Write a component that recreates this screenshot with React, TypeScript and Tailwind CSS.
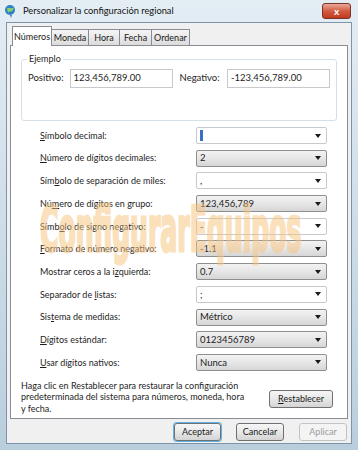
import React from "react";

const font = { fontFamily: 'Lato, "Noto Sans", Arial, sans-serif' };

type Row = { label: React.ReactNode; value: string; list: boolean };

const u = (s: string) => <span className="underline underline-offset-[1px]">{s}</span>;

const rows: Row[] = [
  { label: <>{u("S")}ímbolo decimal:</>, value: "", list: false },
  { label: <>{u("N")}úmero de dígitos decimales:</>, value: "2", list: true },
  { label: <>Sím{u("b")}olo de separación de miles:</>, value: ",", list: false },
  { label: <>Nú{u("m")}ero de dígitos en grupo:</>, value: "123,456,789", list: true },
  { label: <>Símb{u("o")}lo de signo negativo:</>, value: "-", list: false },
  { label: <>{u("F")}ormato de número negativo:</>, value: "-1.1", list: true },
  { label: <>Mostrar ceros a la i{u("z")}quierda:</>, value: "0.7", list: true },
  { label: <>Separador de {u("l")}istas:</>, value: ";", list: false },
  { label: <>Sis{u("t")}ema de medidas:</>, value: "Métrico", list: true },
  { label: <>{u("D")}ígitos estándar:</>, value: "0123456789", list: true },
  { label: <>{u("U")}sar dígitos nativos:</>, value: "Nunca", list: true },
];

function Arrow() {
  return (
    <svg width="6" height="4" viewBox="0 0 6 4" className="shrink-0">
      <path d="M0 0h6L3 4z" fill="#1a1a1a" />
    </svg>
  );
}

function Combo({ value, list, first }: { value: string; list: boolean; first?: boolean }) {
  return (
    <div
      className={`flex h-[17px] w-[131px] items-center justify-between rounded-[2px] border pl-[3px] pr-[5px] text-[9.5px] ${
        list
          ? "border-[#8e8f8f] bg-gradient-to-b from-[#f3f3f3] via-[#e6e6e6] to-[#d6d6d6]"
          : "border-[#c6c9ce] bg-white"
      }`}
    >
      <span className="leading-none text-[#222]">
        {first ? <span className="inline-block h-[11px] w-[3px] bg-[#3a6fc8] align-middle" /> : value}
      </span>
      <Arrow />
    </div>
  );
}

function Btn({ children, disabled, w }: { children: React.ReactNode; disabled?: boolean; w: string }) {
  return (
    <div
      className={`flex h-[18px] ${w} items-center justify-center rounded-[3px] border text-[9px] ${
        disabled
          ? "border-[#c4c4c4] bg-[#f4f4f4] text-[#9c9c9c]"
          : "border-[#707070] bg-gradient-to-b from-[#f6f6f6] via-[#e8e8e8] to-[#d4d4d4] text-[#1a1a1a]"
      }`}
    >
      {children}
    </div>
  );
}

export default function App() {
  return (
    <div
      className="relative h-[450px] w-[358px] overflow-hidden bg-gradient-to-b from-[#e4edf4] via-[#cddde9] to-[#b9cedd]"
      style={font}
    >
      {/* Title bar */}
      <div className="flex h-[22px] items-center pl-[4px]">
        <svg width="14" height="14" viewBox="0 0 14 14">
          <circle cx="6" cy="6" r="5" fill="#2f7fc6" />
          <path d="M3 4c2-1 3 1 5 0s2 2 0 3-3 0-4 2" fill="#8fd06a" />
          <path d="M6 11l1 3 1-3z" fill="#2f7fc6" />
        </svg>
        <span className="ml-[5px] text-[9.3px] text-[#111]">Personalizar la configuración regional</span>
        <div className="ml-auto mr-[7px] flex h-[16px] w-[29px] items-center justify-center rounded-[3px] border border-[#7a3326] bg-gradient-to-b from-[#e8a89a] via-[#d35a41] to-[#c0391e] text-[10px] font-bold text-white">
          x
        </div>
      </div>

      {/* Client area */}
      <div className="mx-[6px] flex h-[422px] flex-col border border-[#7f94a8] bg-[#f0f0f0]">
        {/* Tabs */}
        <div className="mt-[2px] flex h-[20px] items-end pl-[5px] text-[9px] text-[#1a1a1a]">
          <div className="relative z-10 -mb-px flex h-[20px] w-[40px] items-center justify-center border border-b-0 border-[#898c95] bg-white">
            Números
          </div>
          {["Moneda", "Hora", "Fecha", "Ordenar"].map((t, i) => (
            <div
              key={t}
              className={`flex h-[16px] items-center justify-center border border-l-0 border-b-0 border-[#898c95] bg-gradient-to-b from-[#f5f5f5] to-[#dcdcdc] ${
                ["w-[37px]", "w-[31px]", "w-[32px]", "w-[38px]"][i]
              }`}
            >
              {t}
            </div>
          ))}
        </div>

        {/* Panel */}
        <div className="mx-[3px] flex h-[374px] flex-col border border-[#898c95] bg-white px-[10px] text-[9px] text-[#1e1e1e]">
          {/* Ejemplo */}
          <div className="relative mt-[13px] h-[62px] rounded-[3px] border border-[#d5dfe5] px-[6px] pt-[9px]">
            <span className="absolute -top-[7px] left-[5px] bg-white px-[2px] leading-[12px]">Ejemplo</span>
            <div className="flex items-center text-[9.5px]">
              <span className="w-[42px]">Positivo:</span>
              <div className="flex h-[19px] w-[104px] items-center border border-[#c6c9ce] pl-[3px]">123,456,789.00</div>
              <span className="ml-[7px] w-[48px]">Negativo:</span>
              <div className="flex h-[19px] w-[104px] items-center border border-[#c6c9ce] pl-[3px]">-123,456,789.00</div>
            </div>
          </div>

          {/* Rows */}
          <div className="mt-[6px] flex flex-col gap-[5.7px]">
            {rows.map((r, i) => (
              <div key={i} className="flex h-[17px] items-center">
                <span className="ml-[19px] w-[156px]">{r.label}</span>
                <Combo value={r.value} list={r.list} first={i === 0} />
              </div>
            ))}
          </div>

          {/* Reset */}
          <div className="mt-[9px] flex items-center">
            <p className="w-[236px] whitespace-nowrap leading-[11.5px]">
              Haga clic en Restablecer para restaurar la configuración
              <br />
              predeterminada del sistema para números, moneda, hora
              <br />y fecha.
            </p>
            <div className="ml-auto mr-[4px] mt-[4px]">
              <Btn w="w-[64px]">{u("R")}establecer</Btn>
            </div>
          </div>
        </div>

        {/* Bottom buttons */}
        <div className="mt-[4px] flex justify-end gap-[15px] pr-[4px]">
          <div className="rounded-[3px] ring-1 ring-[#5fb2e6]">
            <Btn w="w-[47px]">Aceptar</Btn>
          </div>
          <Btn w="w-[48px]">Cancelar</Btn>
          <Btn disabled w="w-[48px]">Aplicar</Btn>
        </div>
      </div>

      {/* Watermark */}
      <div className="pointer-events-none absolute left-[40px] top-[199px] select-none">
        <div
          className="origin-left scale-x-[0.45] whitespace-nowrap text-[62px] font-bold leading-none text-[#f7c47c] opacity-50"
          style={{
            fontFamily: '"DejaVu Sans Condensed", "DejaVu Sans", sans-serif',
            WebkitTextStroke: "3px #f7c47c",
            textShadow: "0 0 1px #fff, 1px 1px 0 #fff, -1px -1px 0 #fff",
          }}
        >
          ConfigurarEquipos
        </div>
      </div>
    </div>
  );
}
